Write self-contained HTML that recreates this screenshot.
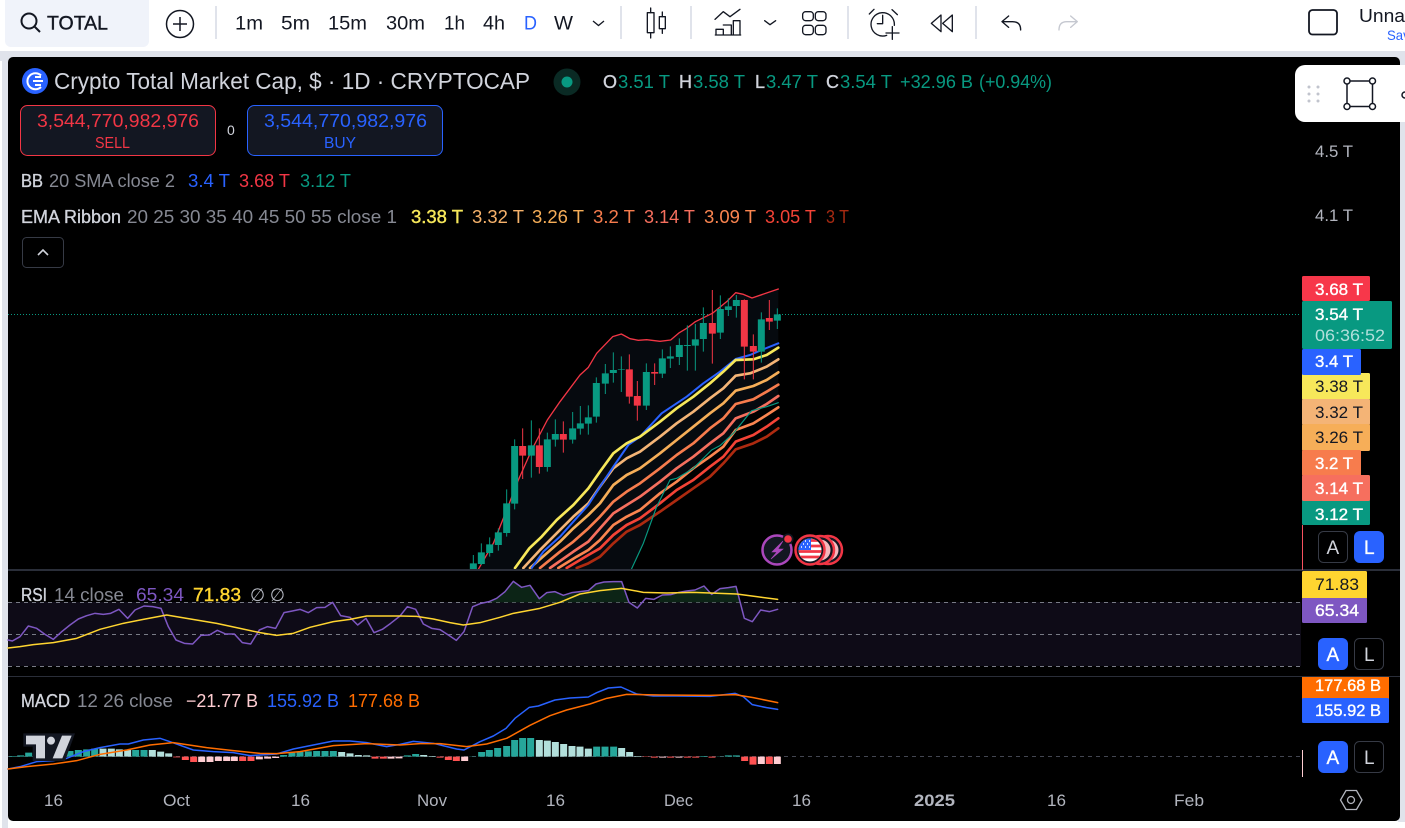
<!DOCTYPE html>
<html><head><meta charset="utf-8"><title>TOTAL</title>
<style>
html,body{margin:0;padding:0;width:1405px;height:828px;overflow:hidden;background:#fff}
svg{display:block;position:absolute;left:0;top:0}
text{font-family:"Liberation Sans",sans-serif;font-size:18px;fill:#d1d4dc;white-space:pre}
.tb text,text.tb{fill:#131722;font-size:19px}
.g{fill:#089981}.r{fill:#f23645}.b{fill:#2962ff}.m{fill:#868993}.w{fill:#fff;stroke:#fff;stroke-width:.35px}.k{fill:#131722}
.ax{fill:#b2b5be;font-size:17px}
.sb{stroke:#d1d4dc;stroke-width:.35px}
.ico{fill:none;stroke:#131722;stroke-width:4;stroke-linecap:round;stroke-linejoin:round}
.l{fill:none;stroke-linejoin:round;stroke-linecap:round}
</style></head><body>
<svg width="1405" height="828" viewBox="0 0 1405 828" xmlns="http://www.w3.org/2000/svg">
<rect x="0" y="0" width="1405" height="828" fill="#fff"/>
<rect x="0" y="51" width="1405" height="10" fill="#e0e3eb"/>
<rect x="2" y="51" width="6" height="777" fill="#e0e3eb"/>
<rect x="1398" y="51" width="7" height="771" fill="#e0e3eb"/>
<rect x="8" y="57" width="1392" height="764" rx="5" fill="#000"/>

<!-- top bar -->
<path d="M5 0H149V41a6 6 0 0 1-6 6H11a6 6 0 0 1-6-6Z" fill="#f0f3fa"/>
<circle cx="29" cy="21" r="7.5" fill="none" stroke="#131722" stroke-width="2"/>
<path d="M34.5 26.5L40 32" stroke="#131722" stroke-width="2" fill="none"/>
<text x="47" y="29.500" textLength="61" lengthAdjust="spacingAndGlyphs" style="font-size:19px;fill:#131722;stroke:#131722;stroke-width:.4px">TOTAL</text>
<circle cx="180" cy="24" r="13.5" fill="none" stroke="#131722" stroke-width="1.5"/>
<path d="M173 24H187M180 17V31" stroke="#131722" stroke-width="1.5"/>
<path d="M216 6V39M621 6V39M691 6V39M848 6V39M976 6V39" stroke="#e0e3eb" stroke-width="2"/>
<g class="tb">
<text x="235" y="29.500" textLength="28" lengthAdjust="spacingAndGlyphs">1m</text>
<text x="281" y="29.500" textLength="29" lengthAdjust="spacingAndGlyphs">5m</text>
<text x="328" y="29.500" textLength="39" lengthAdjust="spacingAndGlyphs">15m</text>
<text x="386" y="29.500" textLength="39" lengthAdjust="spacingAndGlyphs">30m</text>
<text x="444" y="29.500" textLength="21" lengthAdjust="spacingAndGlyphs">1h</text>
<text x="483" y="29.500" textLength="22" lengthAdjust="spacingAndGlyphs">4h</text>
<text x="524" y="29.500" textLength="13" lengthAdjust="spacingAndGlyphs" style="fill:#2962ff">D</text>
<text x="554" y="29.500" textLength="19" lengthAdjust="spacingAndGlyphs">W</text>
</g>
<path d="M593 21L598.500 25.500L604 21" fill="none" stroke="#131722" stroke-width="1.300"/>
<g transform="translate(630 0) scale(.3333)" class="ico">
<rect x="52" y="38" width="20" height="60"/><path d="M62 24V38M62 98V114"/>
<rect x="88" y="50" width="18" height="36"/><path d="M97 36V50M97 86V100"/>
<path d="M255 58L280 35L300 50L330 28"/>
<path d="M258 105V88H280V105M280 75H304V105M310 105V62H330V105M256 105H332"/>
<path d="M404 62L420 74L437 62"/>
<rect x="518" y="35" width="32" height="27" rx="9"/><rect x="556" y="35" width="32" height="27" rx="9"/>
<rect x="518" y="76" width="32" height="28" rx="9"/><rect x="556" y="76" width="32" height="28" rx="9"/>
</g>
<g transform="translate(860 0) scale(.3333)" class="ico">
<path d="M80 106A35 35 0 1 1 103 76"/>
<path d="M68 46V71H52M28 42L42 28M96 29L112 44M97 80V118M78 99H117"/>
<path d="M243 45L214 70L243 95ZM277 45L248 70L277 95Z"/>
<path d="M446 48L426 65L446 82M426 65H458Q482 65 482 90"/>
<path style="stroke:#c5c8d0" d="M632 48L652 65L632 82M652 65H620Q597 65 597 90"/>
</g>
<rect x="1309" y="10" width="28" height="24.500" rx="3.500" fill="none" stroke="#131722" stroke-width="1.800"/>
<text x="1359" y="22" textLength="62" lengthAdjust="spacingAndGlyphs" style="font-size:18px;fill:#131722">Unnam</text>
<text x="1387" y="40" textLength="30" lengthAdjust="spacingAndGlyphs" style="font-size:14px;fill:#2962ff">Save</text>

<!-- legend -->
<circle cx="35" cy="81" r="13" fill="#2962ff"/>
<path d="M41 75.500A8 8 0 1 0 41 87M33 81H43M35 77H41M35 85H41" fill="none" stroke="#fff" stroke-width="2"/>
<text x="54" y="89" textLength="476" lengthAdjust="spacingAndGlyphs" style="font-size:23px">Crypto Total Market Cap, $ · 1D · CRYPTOCAP</text>
<circle cx="567" cy="82" r="13.500" fill="#0a2a24"/><circle cx="567" cy="82" r="5.500" fill="#089981"/>
<g>
<text x="603" y="88" class="sb">O</text><text class="g" x="618" y="88" textLength="52" lengthAdjust="spacingAndGlyphs">3.51 T</text>
<text x="679" y="88" class="sb">H</text><text class="g" x="693" y="88" textLength="52" lengthAdjust="spacingAndGlyphs">3.58 T</text>
<text x="755" y="88" class="sb">L</text><text class="g" x="766" y="88" textLength="52" lengthAdjust="spacingAndGlyphs">3.47 T</text>
<text x="826" y="88" class="sb">C</text><text class="g" x="840" y="88" textLength="52" lengthAdjust="spacingAndGlyphs">3.54 T</text>
<text class="g" x="900" y="88" textLength="73" lengthAdjust="spacingAndGlyphs">+32.96 B</text><text class="g" x="979" y="88" textLength="73" lengthAdjust="spacingAndGlyphs">(+0.94%)</text>
</g>
<rect x="20.500" y="105.500" width="195" height="50" rx="7" fill="#131722" stroke="#f23645"/>
<rect x="247.500" y="105.500" width="195" height="50" rx="7" fill="#131722" stroke="#2962ff"/>
<text class="r" x="37" y="127" textLength="162" lengthAdjust="spacingAndGlyphs">3,544,770,982,976</text>
<text class="r" x="95" y="148" textLength="35" lengthAdjust="spacingAndGlyphs" style="font-size:16px">SELL</text>
<text x="227" y="135" style="font-size:14px">0</text>
<text class="b" x="264" y="127" textLength="163" lengthAdjust="spacingAndGlyphs">3,544,770,982,976</text>
<text class="b" x="324" y="148" textLength="32" lengthAdjust="spacingAndGlyphs" style="font-size:16px">BUY</text>
<text x="21" y="187" textLength="22" lengthAdjust="spacingAndGlyphs" class="sb">BB</text>
<text class="m" x="49" y="187" textLength="126" lengthAdjust="spacingAndGlyphs">20 SMA close 2</text>
<text class="b" x="188" y="187" textLength="42" lengthAdjust="spacingAndGlyphs">3.4 T</text>
<text class="r" x="239" y="187" textLength="51" lengthAdjust="spacingAndGlyphs">3.68 T</text>
<text class="g" x="300" y="187" textLength="51" lengthAdjust="spacingAndGlyphs">3.12 T</text>
<text x="21" y="223" textLength="100" lengthAdjust="spacingAndGlyphs" class="sb">EMA Ribbon</text>
<text class="m" x="127" y="223" textLength="270" lengthAdjust="spacingAndGlyphs">20 25 30 35 40 45 50 55 close 1</text>
<text x="411" y="223" textLength="52" lengthAdjust="spacingAndGlyphs" style="fill:#f7e85a;stroke:#f7e85a;stroke-width:.4px">3.38 T</text>
<text x="472" y="223" textLength="52" lengthAdjust="spacingAndGlyphs" style="fill:#f6b26b">3.32 T</text>
<text x="532" y="223" textLength="52" lengthAdjust="spacingAndGlyphs" style="fill:#f6ae58">3.26 T</text>
<text x="593" y="223" textLength="42" lengthAdjust="spacingAndGlyphs" style="fill:#f77c4d">3.2 T</text>
<text x="644" y="223" textLength="51" lengthAdjust="spacingAndGlyphs" style="fill:#f66f5e">3.14 T</text>
<text x="704" y="223" textLength="52" lengthAdjust="spacingAndGlyphs" style="fill:#fb8550">3.09 T</text>
<text x="765" y="223" textLength="51" lengthAdjust="spacingAndGlyphs" style="fill:#f44336">3.05 T</text>
<text x="826" y="223" textLength="23" lengthAdjust="spacingAndGlyphs" style="fill:#a82a12">3 T</text>
<rect x="22.500" y="237.500" width="41" height="30" rx="4" fill="#000" stroke="#363a45"/>
<path d="M38 255L43 250L48 255" fill="none" stroke="#d1d4dc" stroke-width="1.600"/>

<text class="ax" x="1315" y="157" textLength="38" lengthAdjust="spacingAndGlyphs">4.5 T</text>
<text class="ax" x="1315" y="221" textLength="38" lengthAdjust="spacingAndGlyphs">4.1 T</text>

<!-- price line -->
<path d="M8 314.500H1301" stroke="#089981" stroke-dasharray="1 2" fill="none"/>

<!-- main chart -->
<g transform="translate(460 280) scale(.33333)">
<polygon fill="#060a0f" points="55,868 100,790 140,690 175,600 215,510 262,420 300,365 360,285 385,262 410,220 458,170 484,162 510,176 535,181 560,179 600,184 632,180 658,158 680,145 706,125 757,100 800,65 827,38 850,43 876,54 955,27 955,368 920,380 875,392 820,460 780,497 755,510 700,565 650,595 630,600 590,680 550,790 515,868"/>
<g class="l" stroke-width="4">
<polyline stroke="#f23645" points="55,868 100,790 140,690 175,600 215,510 262,420 300,365 360,285 385,262 410,220 458,170 484,162 510,176 535,181 560,179 600,184 632,180 658,158 680,145 706,125 757,100 800,65 827,38 850,43 876,54 955,27"/>
</g>
<g class="l" stroke-width="8">
<polyline stroke="#ad2a10" points="350,864 385,850 420,830 460,790 500,755 540,735 600,695 650,660 700,625 750,590 790,550 827,508 880,490 920,470 955,445"/>
<polyline stroke="#f44336" points="320,864 385,825 420,805 460,765 500,735 540,715 600,670 650,630 700,600 750,560 790,530 827,485 880,465 920,440 955,415"/>
<polyline stroke="#fb8550" points="295,864 350,830 385,810 420,780 460,735 500,710 540,690 600,640 650,605 700,565 750,530 790,500 827,450 880,430 920,405 955,382"/>
<polyline stroke="#f66f5e" points="270,864 340,815 385,785 420,745 460,700 500,675 540,650 600,605 650,565 700,530 750,490 790,460 827,415 880,395 920,372 955,348"/>
<polyline stroke="#f77c4d" points="240,864 300,815 340,785 385,745 420,710 460,665 500,635 540,610 600,565 650,525 700,490 750,445 790,415 827,372 880,358 920,335 955,314"/>
<polyline stroke="#f6ae58" points="210,864 260,820 300,785 340,745 385,705 420,670 460,615 500,585 540,565 600,520 650,480 700,440 750,400 790,370 827,332 880,318 920,300 955,277"/>
<polyline stroke="#f4b476" points="190,864 240,810 290,760 340,710 385,670 420,620 460,565 500,535 540,515 600,470 650,430 700,395 750,355 790,325 827,287 870,280 920,260 955,238"/>
<polyline stroke="#089981" stroke-width="3.500" points="515,866 550,790 590,680 630,600 650,595 700,565 755,510 780,497 820,460 875,392 920,380 955,368"/>
<polyline stroke="#2962ff" stroke-width="6" points="215,864 250,815 300,770 340,725 385,675 420,620 460,560 505,495 540,470 605,400 680,350 730,310 780,275 827,237 870,225 905,210 955,190"/>
<polyline stroke="#f7e85a" points="165,864 208,805 245,770 290,720 340,675 385,625 420,575 460,520 500,490 540,470 600,425 650,385 700,350 750,310 790,275 827,240 880,238 920,225 955,203"/>
</g>
<path fill="none" stroke="#089981" stroke-width="3" d="M40 825V868M64 790V855M89 772V830M115 745V812M140 628V770M164 478V688M214 421V593M262 458V575M286 418V500M338 396V491M361 378V464M385 376V464M409 292V428M436 252V342M460 217V308M484 229V336M559 250V390M607 208V294M631 199V264M658 175V255M682 136V272M706 132V272M730 82V215M781 46V177M805 55V108M829 45V113M904 97V248M952 85V147"/>
<path fill="none" stroke="#f23645" stroke-width="3" d="M188 445V597M238 445V581M310 424V518M508 223V371M532 303V422M584 250V315M757 30V251M853 58V298M880 163V298M928 60V150"/>
<path fill="none" stroke="#089981" stroke-width="21" d="M40 850V868M64 817V852M89 793V819M115 757V795M140 670V759M164 498V671M214 496V527M262 478V561M286 462V479M338 445V479M361 430V446M385 412V431M409 309V410M436 280V311M460 270V279M484 267V269M559 276V377M607 235V281M631 229V236M658 195V231M682 195V198M706 178V197M730 129V177M781 87V158M805 79V90M829 60V78M904 118V215M952 103V122"/>
<path fill="none" stroke="#f23645" stroke-width="21" d="M188 498V527M238 496V561M310 462V479M508 268V350M532 348V377M584 276V281M757 129V161M853 60V200M880 198V215M928 114V125"/>
</g>

<!-- event icons -->
<circle cx="828" cy="550" r="14" fill="#131722" stroke="#f23645" stroke-width="2.500"/>
<circle cx="828" cy="550" r="10.500" fill="#f5b8bd"/>
<circle cx="820" cy="550" r="14" fill="#131722" stroke="#f23645" stroke-width="2.500"/>
<circle cx="820" cy="550" r="10.500" fill="#f5b8bd"/>
<circle cx="810" cy="550" r="14.500" fill="#131722" stroke="#f23645" stroke-width="2.500"/>
<clipPath id="fl"><circle cx="810" cy="550" r="11.500"/></clipPath>
<g clip-path="url(#fl)">
<rect x="798" y="538" width="24" height="24" fill="#fff"/>
<path d="M798 540.500H822M798 546H822M798 551.500H822M798 557H822" stroke="#f23645" stroke-width="2.800"/>
<rect x="798" y="538" width="13" height="12" fill="#2962ff"/>
<path d="M801 541h1M805 541h1M809 541h1M803 544h1M807 544h1M801 547h1M805 547h1M809 547h1" stroke="#fff" stroke-width="1.500"/>
</g>
<circle cx="777" cy="550" r="14.500" fill="#131722" stroke="#ab47bc" stroke-width="2.500"/>
<path d="M783 541L772 552H777L771 559L783 549H778Z" fill="#ab47bc" stroke="#ab47bc" stroke-width=".6"/>
<circle cx="788" cy="539" r="5.500" fill="#131722"/><circle cx="788" cy="539" r="3.800" fill="#f23645"/>

<!-- separators -->
<rect x="8" y="569" width="1392" height="2" fill="#2a2e39"/>
<rect x="8" y="676" width="1392" height="1" fill="#2a2e39"/>

<!-- RSI -->
<rect x="8" y="602" width="1293" height="64" fill="#0e0b17"/>
<path d="M8 602.500H1301M8 634.500H1301M8 666.500H1301" stroke="#787b86" stroke-dasharray="4 4" fill="none"/>
<g transform="translate(0 570) scale(.33333)">
<g transform="translate(1200 0)">
<polygon fill="#0c2416" points="262,97 267,95 290,85 315,65 340,34 365,52 390,46 418,86 440,68 465,65 490,76 515,68 540,65 565,62 588,42 612,36 640,35 665,35 686,97"/>
<polygon fill="#0c2416" points="770,97 787,75 812,74 837,67 860,63 885,60 912,48 935,73 960,56 985,53 1008,49 1022,97"/>
</g>
<polyline class="l" stroke="#7e57c2" stroke-width="4.500" points="24,210 37,213 60,200 85,168 110,175 135,193 160,208 185,185 210,165 235,147 260,137 285,130 310,133 332,130 357,118 383,145 405,120 432,108 458,110 483,115 505,170 528,210 553,220 578,222 603,196 628,195 652,181 677,192 703,192 727,218 752,222 778,180 802,170 827,175 852,128 877,123 900,118 925,128 950,113 975,112 998,97 1022,137 1050,142 1073,165 1098,145 1122,188 1147,178 1172,160 1200,138 1222,110 1247,118 1270,162 1295,175 1320,179 1345,195 1369,211 1392,185 1418,110 1443,100 1467,95 1490,85 1515,65 1540,34 1565,52 1590,46 1618,86 1640,68 1665,65 1690,76 1715,68 1740,65 1765,62 1788,42 1812,36 1840,35 1865,35 1887,97 1912,114 1937,85 1962,88 1987,75 2012,74 2037,67 2060,63 2085,60 2112,48 2135,73 2160,56 2185,53 2208,49 2233,145 2257,155 2282,120 2308,125 2333,118"/>
<polyline class="l" stroke="#ffd530" stroke-width="4.500" points="24,234 60,230 100,224 160,218 230,205 300,178 370,160 430,148 500,135 560,145 650,160 720,175 780,188 830,196 880,190 930,172 1000,155 1050,148 1100,138 1200,138 1250,139 1300,147 1350,158 1390,165 1440,158 1500,142 1540,130 1620,115 1680,97 1740,72 1800,62 1865,55 1930,67 2000,69 2080,67 2210,72 2270,80 2333,88"/>
</g>
<text x="21" y="601" textLength="26" lengthAdjust="spacingAndGlyphs" class="sb">RSI</text>
<text class="m" x="54" y="601" textLength="70" lengthAdjust="spacingAndGlyphs">14 close</text>
<text x="136" y="601" textLength="48" lengthAdjust="spacingAndGlyphs" style="fill:#7e57c2">65.34</text>
<text x="193" y="601" textLength="48" lengthAdjust="spacingAndGlyphs" style="fill:#ffd530;stroke:#ffd530;stroke-width:.4px">71.83</text>
<text x="250" y="601" textLength="35" lengthAdjust="spacingAndGlyphs" style="fill:#b2b5be">∅ ∅</text>

<!-- MACD -->
<path d="M8 756.500H1301" stroke="#434651" stroke-dasharray="4 4" fill="none"/>
<g transform="translate(0 570) scale(.33333)" stroke-width="21" fill="none">
<path stroke="#26a69a" d="M38 560V558M62 560V556M86 560V548M110 560V546M135 560V545M160 560V544M185 560V543M210 560V543M235 560V540M260 560V538M284 560V536M407 560V540M432 560V540M851 560V555M876 560V548M900 560V546M925 560V544M950 560V543M975 560V543M1000 560V543M1222 560V556M1247 560V552M1418 560V559M1445 560V546M1468 560V540M1493 560V534M1520 560V528M1544 560V510M1568 560V504M1592 560V504M1790 560V530M1815 560V530M1841 560V530M2111 560V558M2160 560V559M2185 560V556M2209 560V556"/>
<path stroke="#b2dfdb" d="M309 560V536M334 560V536M358 560V538M383 560V540M457 560V540M482 560V545M506 560V550M1025 560V546M1050 560V550M1075 560V555M1100 560V556M1271 560V555M1296 560V558M1618 560V510M1642 560V512M1666 560V516M1691 560V522M1716 560V528M1740 560V530M1765 560V536M1865 560V534M1889 560V546M1913 560V558"/>
<path stroke="#ff5252" d="M530 560V562M556 560V570M581 560V576M728 560V573M753 560V573M1125 560V566M1150 560V566M1320 560V563M1345 560V570M1369 560V573M1938 560V561M1963 560V563M2012 560V563M2062 560V563M2087 560V563M2136 560V563M2234 560V573M2259 560V584M2308 560V582"/>
<path stroke="#ffcdd2" d="M605 560V576M630 560V576M655 560V573M680 560V573M703 560V573M778 560V568M803 560V566M827 560V564M1173 560V566M1197 560V565M1394 560V573M1988 560V563M2037 560V563M2284 560V582M2332 560V582"/>
</g>
<g transform="translate(0 570) scale(.33333)">
<polyline class="l" stroke="#2962ff" stroke-width="4.500" points="24,597 60,590 110,575 160,572 200,565 250,545 300,533 360,522 385,522 430,510 480,505 510,515 580,540 640,545 700,548 750,557 830,552 880,537 940,525 1000,513 1050,513 1100,518 1160,530 1200,523 1240,514 1300,520 1370,537 1392,540 1440,515 1480,498 1518,475 1545,445 1588,412 1615,408 1665,390 1710,384 1765,381 1790,368 1825,354 1863,351 1910,372 1960,378 2030,378 2130,379 2205,370 2230,380 2257,404 2300,413 2333,418"/>
<polyline class="l" stroke="#ff6d00" stroke-width="4.500" points="24,597 80,590 160,582 230,572 300,553 380,540 450,525 520,518 620,533 700,542 780,550 830,551 900,545 1000,527 1100,521 1200,525 1260,521 1320,521 1400,530 1460,522 1520,505 1590,466 1650,437 1700,420 1770,402 1820,385 1880,373 1980,375 2130,376 2205,374 2260,383 2333,398"/>
<path d="M70 490H225L195 573H98V530H70Z" fill="#131722"/>
<path d="M78 497H135V565H108V523H78Z" fill="#d1d4dc"/>
<circle cx="153" cy="512" r="12" fill="#d1d4dc"/>
<path d="M186 497H215L187 565H158Z" fill="#d1d4dc"/>
</g>
<text x="21" y="707" textLength="49" lengthAdjust="spacingAndGlyphs" class="sb">MACD</text>
<text class="m" x="77" y="707" textLength="96" lengthAdjust="spacingAndGlyphs">12 26 close</text>
<text x="186" y="707" textLength="72" lengthAdjust="spacingAndGlyphs" style="fill:#ffcdd2">−21.77 B</text>
<text class="b" x="267" y="707" textLength="72" lengthAdjust="spacingAndGlyphs">155.92 B</text>
<text x="348" y="707" textLength="72" lengthAdjust="spacingAndGlyphs" style="fill:#ff6d00">177.68 B</text>

<!-- axis labels -->
<rect x="1302" y="276" width="68" height="25" rx="1.500" fill="#f7374a"/>
<rect x="1302" y="499" width="68" height="26" rx="1.500" fill="#089981"/>
<rect x="1302" y="373" width="68" height="27" rx="1.500" fill="#f7e85a"/>
<rect x="1302" y="399" width="68" height="26" rx="1.500" fill="#f4b476"/>
<rect x="1302" y="424" width="68" height="27" rx="1.500" fill="#f6ae58"/>
<rect x="1302" y="450" width="59" height="26" rx="1.500" fill="#f77c4d"/>
<rect x="1302" y="475" width="68" height="26" rx="1.500" fill="#f66f5e"/>
<rect x="1302" y="349" width="59" height="26" rx="1.500" fill="#2962ff"/>
<rect x="1302" y="301" width="90" height="48" rx="1.500" fill="#089981"/>
<rect x="1302" y="571" width="65" height="28" rx="1.500" fill="#ffd530"/>
<rect x="1302" y="598" width="65" height="25" rx="1.500" fill="#7e57c2"/>
<rect x="1302" y="677" width="87" height="22" fill="#ff6d00"/>
<rect x="1302" y="698" width="87" height="25" rx="1.500" fill="#2962ff"/>
<g style="font-size:17px">
<text class="w" x="1315" y="295" textLength="48" lengthAdjust="spacingAndGlyphs" style="font-size:17px">3.68 T</text>
<text class="w" x="1315" y="320" textLength="48" lengthAdjust="spacingAndGlyphs" style="font-size:17px">3.54 T</text>
<text x="1315" y="341" textLength="70" lengthAdjust="spacingAndGlyphs" style="font-size:17px;fill:#b2dfdb">06:36:52</text>
<text class="w" x="1315" y="367" textLength="38" lengthAdjust="spacingAndGlyphs" style="font-size:17px">3.4 T</text>
<text class="k" x="1315" y="392" textLength="48" lengthAdjust="spacingAndGlyphs" style="font-size:17px">3.38 T</text>
<text class="k" x="1315" y="418" textLength="48" lengthAdjust="spacingAndGlyphs" style="font-size:17px">3.32 T</text>
<text class="k" x="1315" y="443" textLength="48" lengthAdjust="spacingAndGlyphs" style="font-size:17px">3.26 T</text>
<text class="w" x="1315" y="469" textLength="38" lengthAdjust="spacingAndGlyphs" style="font-size:17px">3.2 T</text>
<text class="w" x="1315" y="494" textLength="48" lengthAdjust="spacingAndGlyphs" style="font-size:17px">3.14 T</text>
<text class="w" x="1315" y="520" textLength="48" lengthAdjust="spacingAndGlyphs" style="font-size:17px">3.12 T</text>
<text class="k" x="1315" y="590" textLength="44" lengthAdjust="spacingAndGlyphs" style="font-size:17px">71.83</text>
<text class="w" x="1315" y="616" textLength="44" lengthAdjust="spacingAndGlyphs" style="font-size:17px">65.34</text>
<text class="w" x="1315" y="691" textLength="66" lengthAdjust="spacingAndGlyphs" style="font-size:17px">177.68 B</text>
<text class="w" x="1315" y="716" textLength="66" lengthAdjust="spacingAndGlyphs" style="font-size:17px">155.92 B</text>
</g>
<path d="M1302.500 525V570" stroke="#f7525f"/>
<path d="M1302.500 750V777" stroke="#ffcdd2"/>

<!-- A/L buttons -->
<rect x="1318.500" y="531.500" width="29" height="31" rx="5" fill="#000" stroke="#363a45"/>
<text x="1326.500" y="554" style="font-size:19px;fill:#d1d4dc">A</text>
<rect x="1354" y="531" width="30" height="32" rx="6" fill="#2962ff"/>
<text class="w" x="1364" y="554" style="font-size:19px">L</text>
<rect x="1318" y="638" width="30" height="32" rx="6" fill="#2962ff"/>
<text class="w" x="1326.500" y="661" style="font-size:19px">A</text>
<rect x="1354.500" y="638.500" width="29" height="31" rx="5" fill="#000" stroke="#363a45"/>
<text x="1364" y="661" style="font-size:19px">L</text>
<rect x="1318" y="741" width="30" height="32" rx="6" fill="#2962ff"/>
<text class="w" x="1326.500" y="764" style="font-size:19px">A</text>
<rect x="1354.500" y="741.500" width="29" height="31" rx="5" fill="#000" stroke="#363a45"/>
<text x="1364" y="764" style="font-size:19px">L</text>

<!-- time axis -->
<text class="ax" x="44" y="806" textLength="19" lengthAdjust="spacingAndGlyphs">16</text>
<text class="ax" x="163" y="806" textLength="27" lengthAdjust="spacingAndGlyphs">Oct</text>
<text class="ax" x="291" y="806" textLength="19" lengthAdjust="spacingAndGlyphs">16</text>
<text class="ax" x="417" y="806" textLength="30" lengthAdjust="spacingAndGlyphs">Nov</text>
<text class="ax" x="546" y="806" textLength="19" lengthAdjust="spacingAndGlyphs">16</text>
<text class="ax" x="664" y="806" textLength="29" lengthAdjust="spacingAndGlyphs">Dec</text>
<text class="ax" x="792" y="806" textLength="19" lengthAdjust="spacingAndGlyphs">16</text>
<text class="ax" x="914" y="806" textLength="41" lengthAdjust="spacingAndGlyphs" style="font-weight:700">2025</text>
<text class="ax" x="1047" y="806" textLength="19" lengthAdjust="spacingAndGlyphs">16</text>
<text class="ax" x="1174" y="806" textLength="30" lengthAdjust="spacingAndGlyphs">Feb</text>
<path d="M1340.500 800L1346 790.500H1356.500L1362 800L1356.500 809.500H1346Z" fill="none" stroke="#b2b5be" stroke-width="1.300"/>
<circle cx="1351" cy="800" r="3.500" fill="none" stroke="#b2b5be" stroke-width="1.300"/>

<!-- floating toolbar -->
<path d="M1405 65H1305a10 10 0 0 0-10 10V112a10 10 0 0 0 10 10H1405Z" fill="#fff"/>
<g fill="#c1c4cd"><circle cx="1309" cy="87" r="1.500"/><circle cx="1318" cy="87" r="1.500"/><circle cx="1309" cy="94" r="1.500"/><circle cx="1318" cy="94" r="1.500"/><circle cx="1309" cy="101" r="1.500"/><circle cx="1318" cy="101" r="1.500"/></g>
<rect x="1347" y="81" width="25.500" height="25.500" fill="none" stroke="#131722" stroke-width="1.500"/>
<g fill="#fff" stroke="#131722" stroke-width="1.500"><circle cx="1347" cy="81" r="3"/><circle cx="1372.500" cy="81" r="3"/><circle cx="1347" cy="106.500" r="3"/><circle cx="1372.500" cy="106.500" r="3"/><circle cx="1405" cy="95" r="3"/></g>
</svg>
</body></html>
